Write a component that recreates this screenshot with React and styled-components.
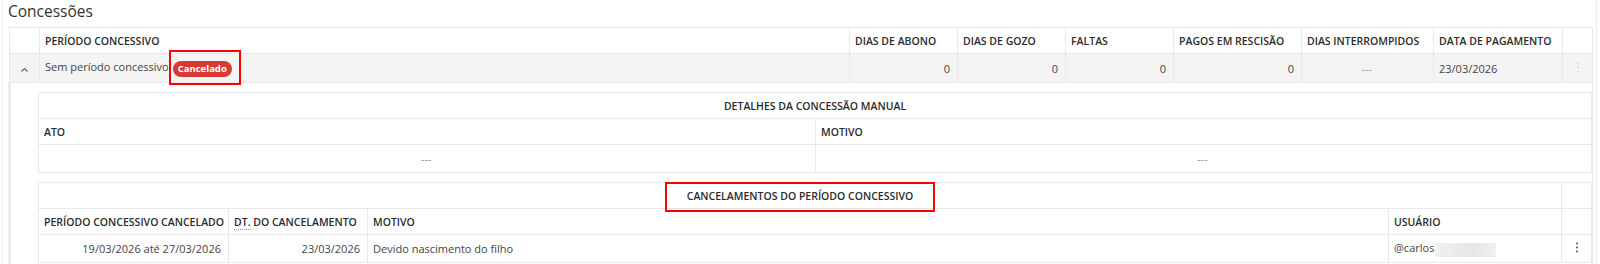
import React from 'react';
import styled, { createGlobalStyle } from 'styled-components';

const GlobalStyle = createGlobalStyle`
  body {
    margin: 0;
    background: #fff;
    font-family: 'Open Sans', 'Liberation Sans', sans-serif;
    color: #444;
  }
`;

const Page = styled.div`
  margin-left: 2px;
  width: 1583px;
  padding: 0 5px;
  border-left: 1px solid #ececec;
  border-right: 1px solid #ececec;
  height: 264px;
  overflow: hidden;
`;

const Title = styled.h2`
  margin: 0;
  height: 27px;
  font-size: 15.5px;
  font-weight: 400;
  line-height: 22px;
  color: #333;
`;

const Table = styled.table`
  width: ${(p) => p.width}px;
  table-layout: fixed;
  border-collapse: collapse;
  font-size: 10.5px;
`;

const Th = styled.th`
  height: ${(p) => p.h || 25}px;
  padding: 0 5px;
  border: 1px solid #e8e8e8;
  background: #fff;
  color: #2b2b2b;
  font-size: 10.5px;
  font-weight: 600;
  text-align: ${(p) => p.align || 'left'};
  white-space: nowrap;
`;

const TitleTh = styled(Th)`
  text-align: center;
`;

const Row = styled.tr`
  background: ${(p) => (p.$shaded ? '#f4f4f4' : '#fff')};
`;

const Td = styled.td`
  height: ${(p) => p.h || 27}px;
  padding: 0 7px 0 5px;
  border: 1px solid #e8e8e8;
  font-size: 11px;
  color: #444;
  text-align: ${(p) => p.align || 'left'};
  white-space: nowrap;
`;

const Muted = styled.span`
  color: #999;
`;

const DetailCell = styled.td`
  padding: 9px 0 2px 27px;
  border: 1px solid #e8e8e8;
  border-left: 3px solid #ececec;
  background: #fff;
`;

const Stack = styled.div`
  display: flex;
  flex-direction: column;
  gap: 9px;
`;

const BadgeWrap = styled.span`
  position: relative;
  display: inline-block;
  margin-left: 4px;
  vertical-align: middle;
`;

const Badge = styled.span`
  display: block;
  padding: 0 5px;
  height: 16px;
  line-height: 16px;
  border-radius: 8px;
  background: #d83a33;
  color: #fff;
  font-size: 9.5px;
  font-weight: 700;
`;

const Highlight = styled.span`
  position: absolute;
  border: 2px solid #f00;
  pointer-events: none;
  ${(p) => p.$inset}
`;

const TitleText = styled.span`
  position: relative;
  display: inline-block;
`;

const Abbr = styled.span`
  border-bottom: 1px dotted #999;
`;

const Redacted = styled.span`
  display: inline-block;
  width: 61px;
  height: 14px;
  margin-left: 1px;
  vertical-align: middle;
  background: linear-gradient(90deg, #f1f1f1, #e6e6e6 60%, #f0f0f0);
`;

const IconCell = styled(Td)`
  padding: 0;
  text-align: center;
  color: ${(p) => (p.$faded ? '#d0d0d0' : '#555')};
`;

const Chevron = () => (
  <svg width="9" height="6" viewBox="0 0 9 6" fill="none">
    <path d="M1.5 4.5 4.5 1.5 7.5 4.5" stroke="#666" strokeWidth="1.2" />
  </svg>
);

const Kebab = ({ small }) => (
  <svg width="4" height="11" viewBox="0 0 4 11" fill="currentColor">
    <circle cx="2" cy="1.5" r={small ? 0.8 : 1} />
    <circle cx="2" cy="5.5" r={small ? 0.8 : 1} />
    <circle cx="2" cy="9.5" r={small ? 0.8 : 1} />
  </svg>
);

const mainCols = [30, 810, 108, 108, 108, 128, 132, 129, 30];
const cancelCols = [190, 139, 1021, 173, 30];

const App = () => {
  return (
    <>
      <GlobalStyle />
      <Page>
        <Title>Concessões</Title>
        <Table width={1583}>
          <colgroup>
            {mainCols.map((w, i) => (
              <col key={i} style={{ width: w }} />
            ))}
          </colgroup>
          <thead>
            <tr>
              <Th />
              <Th>PERÍODO CONCESSIVO</Th>
              <Th>DIAS DE ABONO</Th>
              <Th>DIAS DE GOZO</Th>
              <Th>FALTAS</Th>
              <Th>PAGOS EM RESCISÃO</Th>
              <Th>DIAS INTERROMPIDOS</Th>
              <Th>DATA DE PAGAMENTO</Th>
              <Th />
            </tr>
          </thead>
          <tbody>
            <Row $shaded>
              <IconCell h={28}>
                <Chevron />
              </IconCell>
              <Td h={28}>
                Sem período concessivo
                <BadgeWrap>
                  <Badge>Cancelado</Badge>
                  <Highlight $inset="top: -11px; bottom: -8px; left: -4px; right: -9px;" />
                </BadgeWrap>
              </Td>
              <Td align="right">0</Td>
              <Td align="right">0</Td>
              <Td align="right">0</Td>
              <Td align="right">0</Td>
              <Td align="center">
                <Muted>---</Muted>
              </Td>
              <Td>23/03/2026</Td>
              <IconCell $faded>
                <Kebab small />
              </IconCell>
            </Row>
            <tr>
              <DetailCell colSpan={9}>
                <Stack>
                  <Table width={1553}>
                    <colgroup>
                      <col style={{ width: 777 }} />
                      <col style={{ width: 776 }} />
                    </colgroup>
                    <thead>
                      <tr>
                        <TitleTh colSpan={2}>DETALHES DA CONCESSÃO MANUAL</TitleTh>
                      </tr>
                      <tr>
                        <Th>ATO</Th>
                        <Th>MOTIVO</Th>
                      </tr>
                    </thead>
                    <tbody>
                      <tr>
                        <Td align="center">
                          <Muted>---</Muted>
                        </Td>
                        <Td align="center">
                          <Muted>---</Muted>
                        </Td>
                      </tr>
                    </tbody>
                  </Table>
                  <Table width={1553}>
                    <colgroup>
                      {cancelCols.map((w, i) => (
                        <col key={i} style={{ width: w }} />
                      ))}
                    </colgroup>
                    <thead>
                      <tr>
                        <TitleTh colSpan={4}>
                          <TitleText>
                            CANCELAMENTOS DO PERÍODO CONCESSIVO
                            <Highlight $inset="top: -7px; bottom: -9px; left: -22px; right: -22px;" />
                          </TitleText>
                        </TitleTh>
                        <Th />
                      </tr>
                      <tr>
                        <Th>PERÍODO CONCESSIVO CANCELADO</Th>
                        <Th>
                          <Abbr>DT.</Abbr> DO CANCELAMENTO
                        </Th>
                        <Th>MOTIVO</Th>
                        <Th>USUÁRIO</Th>
                        <Th />
                      </tr>
                    </thead>
                    <tbody>
                      <tr>
                        <Td align="right">19/03/2026 até 27/03/2026</Td>
                        <Td align="right">23/03/2026</Td>
                        <Td>Devido nascimento do filho</Td>
                        <Td>
                          @carlos
                          <Redacted />
                        </Td>
                        <IconCell>
                          <Kebab />
                        </IconCell>
                      </tr>
                    </tbody>
                  </Table>
                </Stack>
              </DetailCell>
            </tr>
          </tbody>
        </Table>
      </Page>
    </>
  );
};

export default App;
